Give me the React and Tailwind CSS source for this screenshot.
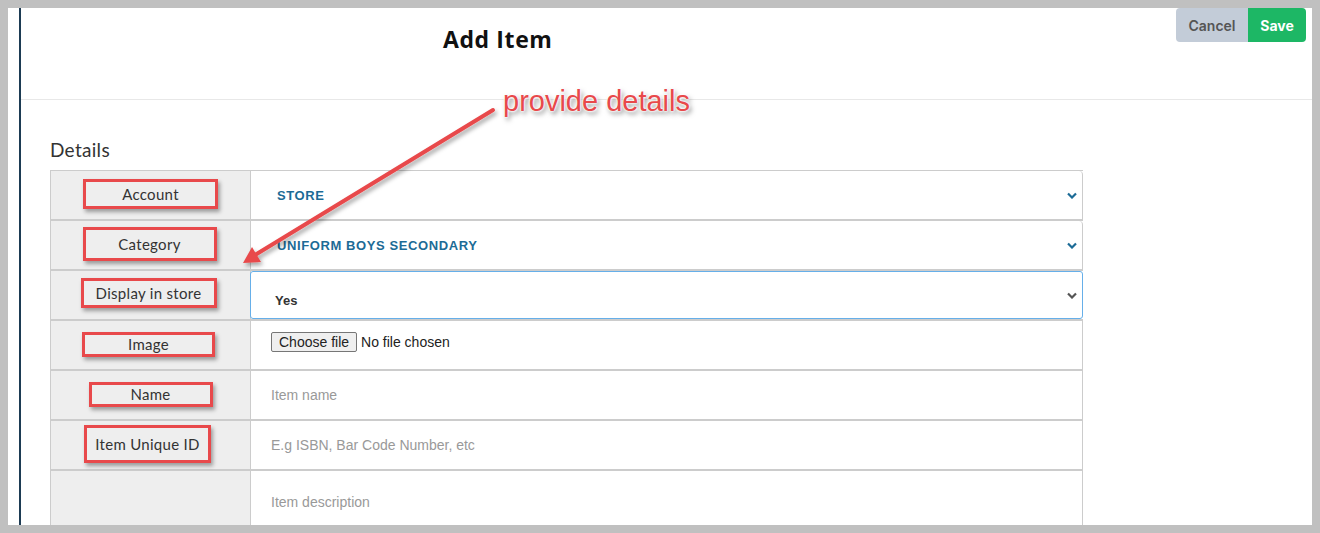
import React from 'react';

const RED = '#e8494b';

const rows = [
  { label: 'Account', box: 'w-[135px] h-[30px] mt-[-2px]', kind: 'select', value: 'STORE' },
  { label: 'Category', box: 'w-[134px] h-[34px] mt-[-2px] ml-[-2px]', kind: 'select', value: 'UNIFORM BOYS SECONDARY' },
  { label: 'Display in store', box: 'w-[136px] h-[30px] mt-[-4px] ml-[-4px]', kind: 'yes', value: 'Yes' },
  { label: 'Image', box: 'w-[133px] h-[25px] mt-[-2px] ml-[-4px]', kind: 'file' },
  { label: 'Name', box: 'w-[124px] h-[25px] mt-[-2px]', kind: 'text', value: 'Item name' },
  { label: 'Item Unique ID', box: 'w-[127px] h-[38px] mt-[-2px] ml-[-6px]', kind: 'text', value: 'E.g ISBN, Bar Code Number, etc' },
];

function Chevron({ color }) {
  return (
    <svg width="10" height="7" viewBox="0 0 10 7" className="shrink-0">
      <path d="M1 1.5 L5 5.5 L9 1.5" fill="none" stroke={color} strokeWidth="2.2" />
    </svg>
  );
}

function Value({ row }) {
  if (row.kind === 'select') {
    return (
      <div className="h-full flex items-center justify-between pl-[26px] pr-[5px] border-r border-[#ccc] rounded-tr-[4px]">
        <span className="text-[13px] font-bold tracking-[0.6px] text-[#1c6b96] mt-[2px]">{row.value}</span>
        <Chevron color="#1c6b96" />
      </div>
    );
  }
  if (row.kind === 'yes') {
    return (
      <div className="h-full flex items-center justify-between pl-[24px] pr-[5px] border border-[#66afe9] rounded-[3px] -ml-px">
        <span className="text-[13px] font-bold text-[#333] mt-[12px]">{row.value}</span>
        <Chevron color="#555" />
      </div>
    );
  }
  if (row.kind === 'file') {
    return (
      <div className="h-full flex items-start pt-[11px] pl-[20px] border-r border-[#ccc] gap-[4px] text-[14px] text-[#222]">
        <span className="px-[7px] h-[20px] leading-[18px] border border-[#767676] bg-[#efefef] rounded-[2px]">Choose file</span>
        <span className="leading-[20px]">No file chosen</span>
      </div>
    );
  }
  return (
    <div className="h-full flex items-center pl-[20px] border-r border-[#ccc]">
      <span className="text-[14px] text-[#999]">{row.value}</span>
    </div>
  );
}

export default function App() {
  return (
    <div className="w-[1320px] h-[533px] bg-[#c0c0c0] p-[8px] overflow-hidden" style={{ fontFamily: '"Liberation Sans", Arial, sans-serif' }}>
      <div className="relative w-[1304px] h-[517px] bg-white pl-[11px] overflow-hidden">
        <div className="h-full border-l-2 border-[#1d3b53] flex flex-col">
          {/* Header */}
          <div className="h-[92px] shrink-0 border-b border-[#e8e8e8] flex items-start justify-between">
            <h1 className="ml-[422px] mt-[14px] text-[23px] font-bold tracking-[0.6px] text-[#111]" style={{ fontFamily: '"Open Sans", sans-serif' }}>
              Add Item
            </h1>
            <div className="flex mr-[6px]">
              <button className="w-[72px] h-[34px] bg-[#c3ccd8] text-[#555] text-[14px] font-semibold rounded-l-[4px]" style={{ fontFamily: 'Inter, sans-serif' }}>
                Cancel
              </button>
              <button className="w-[58px] h-[34px] bg-[#1db765] text-white text-[14px] font-bold rounded-r-[4px]" style={{ fontFamily: 'Inter, sans-serif' }}>
                Save
              </button>
            </div>
          </div>

          {/* Details */}
          <div className="pl-[29px]">
            <h2 className="mt-[38px] mb-[8px] text-[19px] text-[#333] leading-[24px] tracking-[0.3px]" style={{ fontFamily: 'Lato, sans-serif' }}>
              Details
            </h2>
            <div className="w-[1033px] border-t border-l border-[#ccc]">
              {rows.map((row) => (
                <div key={row.label} className="flex h-[50px] border-b-2 border-[#ccc]">
                  <div className="w-[200px] shrink-0 bg-[#eee] border-r border-[#ccc] flex items-center justify-center">
                    <div
                      className={`${row.box} border-[3px] border-[#e8494b] flex items-center justify-center shadow-[2px_3px_4px_rgba(0,0,0,0.35)]`}
                    >
                      <span className="text-[15px] text-[#333] tracking-[0.3px] whitespace-nowrap" style={{ fontFamily: 'Lato, sans-serif' }}>
                        {row.label}
                      </span>
                    </div>
                  </div>
                  <div className="flex-1">
                    <Value row={row} />
                  </div>
                </div>
              ))}
              <div className="flex h-[60px]">
                <div className="w-[200px] shrink-0 bg-[#eee] border-r border-[#ccc]" />
                <div className="flex-1 border-r border-[#ccc] pl-[20px] pt-[19px]">
                  <span className="text-[14px] text-[#999]">Item description</span>
                </div>
              </div>
            </div>
          </div>
        </div>

        {/* Annotation */}
        <div
          className="absolute left-[495px] top-[75px] text-[29px] text-[#e8494b] leading-[36px] [text-shadow:0_0_2px_#fff,0_0_2px_#fff,0_0_3px_#fff,2px_3px_5px_rgba(0,0,0,0.5)]"
          style={{ fontFamily: '"Liberation Sans", Arial, sans-serif' }}
        >
          provide details
        </div>
        <svg className="absolute inset-0 pointer-events-none" width="1304" height="517" viewBox="8 8 1304 517">
          <defs>
            <filter id="sh" x="-20%" y="-20%" width="140%" height="140%">
              <feDropShadow dx="2" dy="3" stdDeviation="2" floodColor="#000" floodOpacity="0.35" />
            </filter>
          </defs>
          <g filter="url(#sh)">
            <line x1="493" y1="110" x2="255" y2="255" stroke={RED} strokeWidth="4" strokeLinecap="round" />
            <polygon points="243,263 261,262 252,247" fill={RED} />
          </g>
        </svg>
      </div>
    </div>
  );
}
